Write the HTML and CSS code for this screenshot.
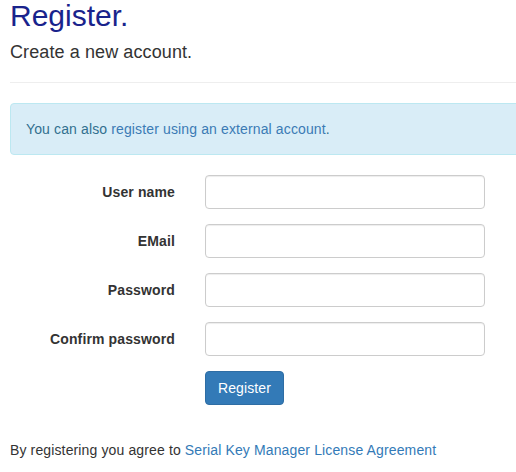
FILE: index.html
```html
<!DOCTYPE html>
<html lang="en">
<head>
<meta charset="utf-8">
<title>Register</title>
<link rel="stylesheet" href="styles.css">
</head>
<body>
<div class="page">
  <h2 class="title">Register.</h2>
  <h4 class="subtitle">Create a new account.</h4>
  <hr class="divider">
  <div class="alert">You can also <a href="#" class="link">register using an external account</a>.</div>
  <form class="form">
    <div class="form-row">
      <label class="form-label" for="u">User name</label>
      <input class="form-input" id="u" type="text">
    </div>
    <div class="form-row">
      <label class="form-label" for="e">EMail</label>
      <input class="form-input" id="e" type="text">
    </div>
    <div class="form-row">
      <label class="form-label" for="p">Password</label>
      <input class="form-input" id="p" type="password">
    </div>
    <div class="form-row">
      <label class="form-label" for="c">Confirm password</label>
      <input class="form-input" id="c" type="password">
    </div>
    <div class="form-row">
      <span></span>
      <button class="btn" type="button">Register</button>
    </div>
  </form>
  <p class="agree">By registering you agree to <a href="#" class="link">Serial Key Manager License Agreement</a></p>
</div>
</body>
</html>
```
FILE: styles.css
```css
html, body {
  margin: 0;
  padding: 0;
  overflow: hidden;
  background: #fff;
}
body {
  font-family: "Liberation Sans", Arial, Helvetica, sans-serif;
  font-size: 14px;
  line-height: 20px;
  letter-spacing: 0.13px;
  color: #333;
}
.page {
  width: 560px;
  padding-left: 10px;
}
.title {
  margin: -1px 0 10px;
  font-size: 30px;
  line-height: 33px;
  font-weight: normal;
  letter-spacing: 0;
  color: #19238c;
}
.subtitle {
  margin: 10px 0 10px;
  font-size: 18px;
  line-height: 20px;
  font-weight: normal;
  letter-spacing: 0.1px;
  color: #333;
}
.divider {
  margin: 20px 0;
  border: 0;
  border-top: 1px solid #eee;
}
.alert {
  padding: 15px;
  margin-bottom: 20px;
  border: 1px solid #bce8f1;
  border-radius: 4px;
  background: #d9edf7;
  color: #31708f;
}
.link {
  color: #337ab7;
  text-decoration: none;
}
.alert .link {
  color: #3b7bb5;
}
.form {
  margin: 0;
}
.form-row {
  display: grid;
  grid-template-columns: 165px 280px;
  column-gap: 30px;
  margin-bottom: 15px;
}
.form-label {
  text-align: right;
  font-weight: bold;
  padding-top: 7px;
  line-height: 20px;
}
.form-input {
  box-sizing: border-box;
  height: 34px;
  width: 280px;
  margin: 0;
  padding: 6px 12px;
  border: 1px solid #ccc;
  border-radius: 4px;
  background: #fff;
  box-shadow: inset 0 1px 1px rgba(0,0,0,.075);
  font: inherit;
}
.btn {
  justify-self: start;
  box-sizing: border-box;
  height: 34px;
  width: 79px;
  padding: 6px 0;
  border: 1px solid #2e6da4;
  border-radius: 4px;
  background: #337ab7;
  color: #fff;
  font-family: inherit;
  font-size: 14px;
  line-height: 20px;
  letter-spacing: 0.13px;
  text-align: center;
}
.agree {
  margin: 35px 0 0;
}
```
